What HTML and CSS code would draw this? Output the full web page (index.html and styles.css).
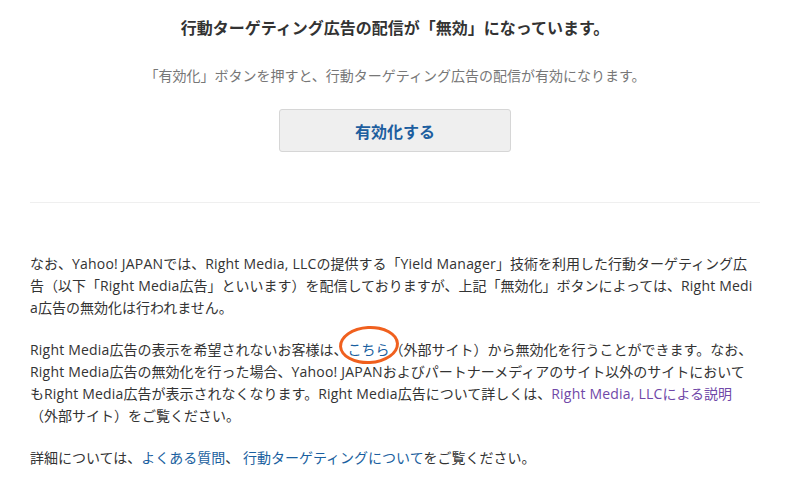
FILE: index.html
```html
<!DOCTYPE html>
<html lang="ja">
<head>
<meta charset="utf-8">
<title>行動ターゲティング広告</title>
<link rel="stylesheet" href="styles.css">
</head>
<body>
<div class="page">
  <section class="status">
    <h1 class="status-title">行動ターゲティング広告の配信が「無効」になっています。</h1>
    <p class="status-lead">「有効化」ボタンを押すと、行動ターゲティング広告の配信が有効になります。</p>
    <div class="status-action"><button class="btn-enable" type="button">有効化する</button></div>
  </section>
  <hr class="divider">
  <section class="notes">
    <p>なお、<span class="en">Yahoo! JAPAN</span>では、<span class="en">Right Media, LLC</span>の提供する「<span class="en">Yield Manager</span>」技術を利用した行動ターゲティング広<br>告（以下「<span class="en">Right Media</span>広告」といいます）を配信しておりますが、上記「無効化」ボタンによっては、<span class="en">Right Medi</span><br><span class="en">a</span>広告の無効化は行われません。</p>
    <p><span class="en">Right Media</span>広告の表示を希望されないお客様は、<a class="link marked" href="#">こちら</a>（外部サイト）から無効化を行うことができます。なお、<br><span class="en">Right Media</span>広告の無効化を行った場合、<span class="en">Yahoo! JAPAN</span>およびパートナーメディアのサイト以外のサイトにおいて<br>も<span class="en">Right Media</span>広告が表示されなくなります。<span class="en">Right Media</span>広告について詳しくは、<a class="link visited" href="#"><span class="en">Right Media, LLC</span>による説明</a><br>（外部サイト）をご覧ください。</p>
    <p>詳細については、<a class="link" href="#">よくある質問</a>、 <a class="link" href="#">行動ターゲティングについて</a>をご覧ください。</p>
  </section>
</div>
</body>
</html>
```

FILE: styles.css
```css
html, body {
  margin: 0;
  padding: 0;
  background: #fff;
}
body {
  font-family: "Open Sans", "Noto Sans CJK JP", sans-serif;
  color: #333;
  text-spacing-trim: space-all;
}
.page {
  padding: 16px 25px 0 30px;
}
.status {
  display: flex;
  flex-direction: column;
  align-items: center;
}
.status-title {
  margin: 0;
  font-size: 16px;
  line-height: 24px;
  font-weight: bold;
  color: #333;
}
.status-lead {
  margin: 25px 0 0;
  font-size: 14px;
  line-height: 22px;
  color: #777;
}
.status-action {
  margin-top: 22px;
}
.btn-enable {
  width: 232px;
  height: 43px;
  background: #efefef;
  border: 1px solid #d6d6d6;
  border-radius: 3px;
  font-family: inherit;
  font-size: 16px;
  font-weight: bold;
  color: #1d5e9f;
  padding: 0;
  cursor: pointer;
}
.divider {
  margin: 50px 0 0;
  border: 0;
  border-top: 1px solid #efefef;
  height: 0;
}
.notes {
  padding-top: 50px;
}
.notes p {
  margin: 0 0 20px;
  font-size: 14px;
  line-height: 22px;
  color: #333;
  white-space: nowrap;
}
.en {
  letter-spacing: 0.2px;
}
.link {
  color: #1a5fa0;
  text-decoration: none;
}
.link.visited {
  color: #7048a8;
}
.marked {
  position: relative;
}
.marked::after {
  content: "";
  position: absolute;
  left: -9px;
  width: 60px;
  top: 50%;
  height: 38px;
  margin-top: -24px;
  box-sizing: border-box;
  border: 3px solid #f0601e;
  border-radius: 50%;
  transform: rotate(-3deg);
}
```
